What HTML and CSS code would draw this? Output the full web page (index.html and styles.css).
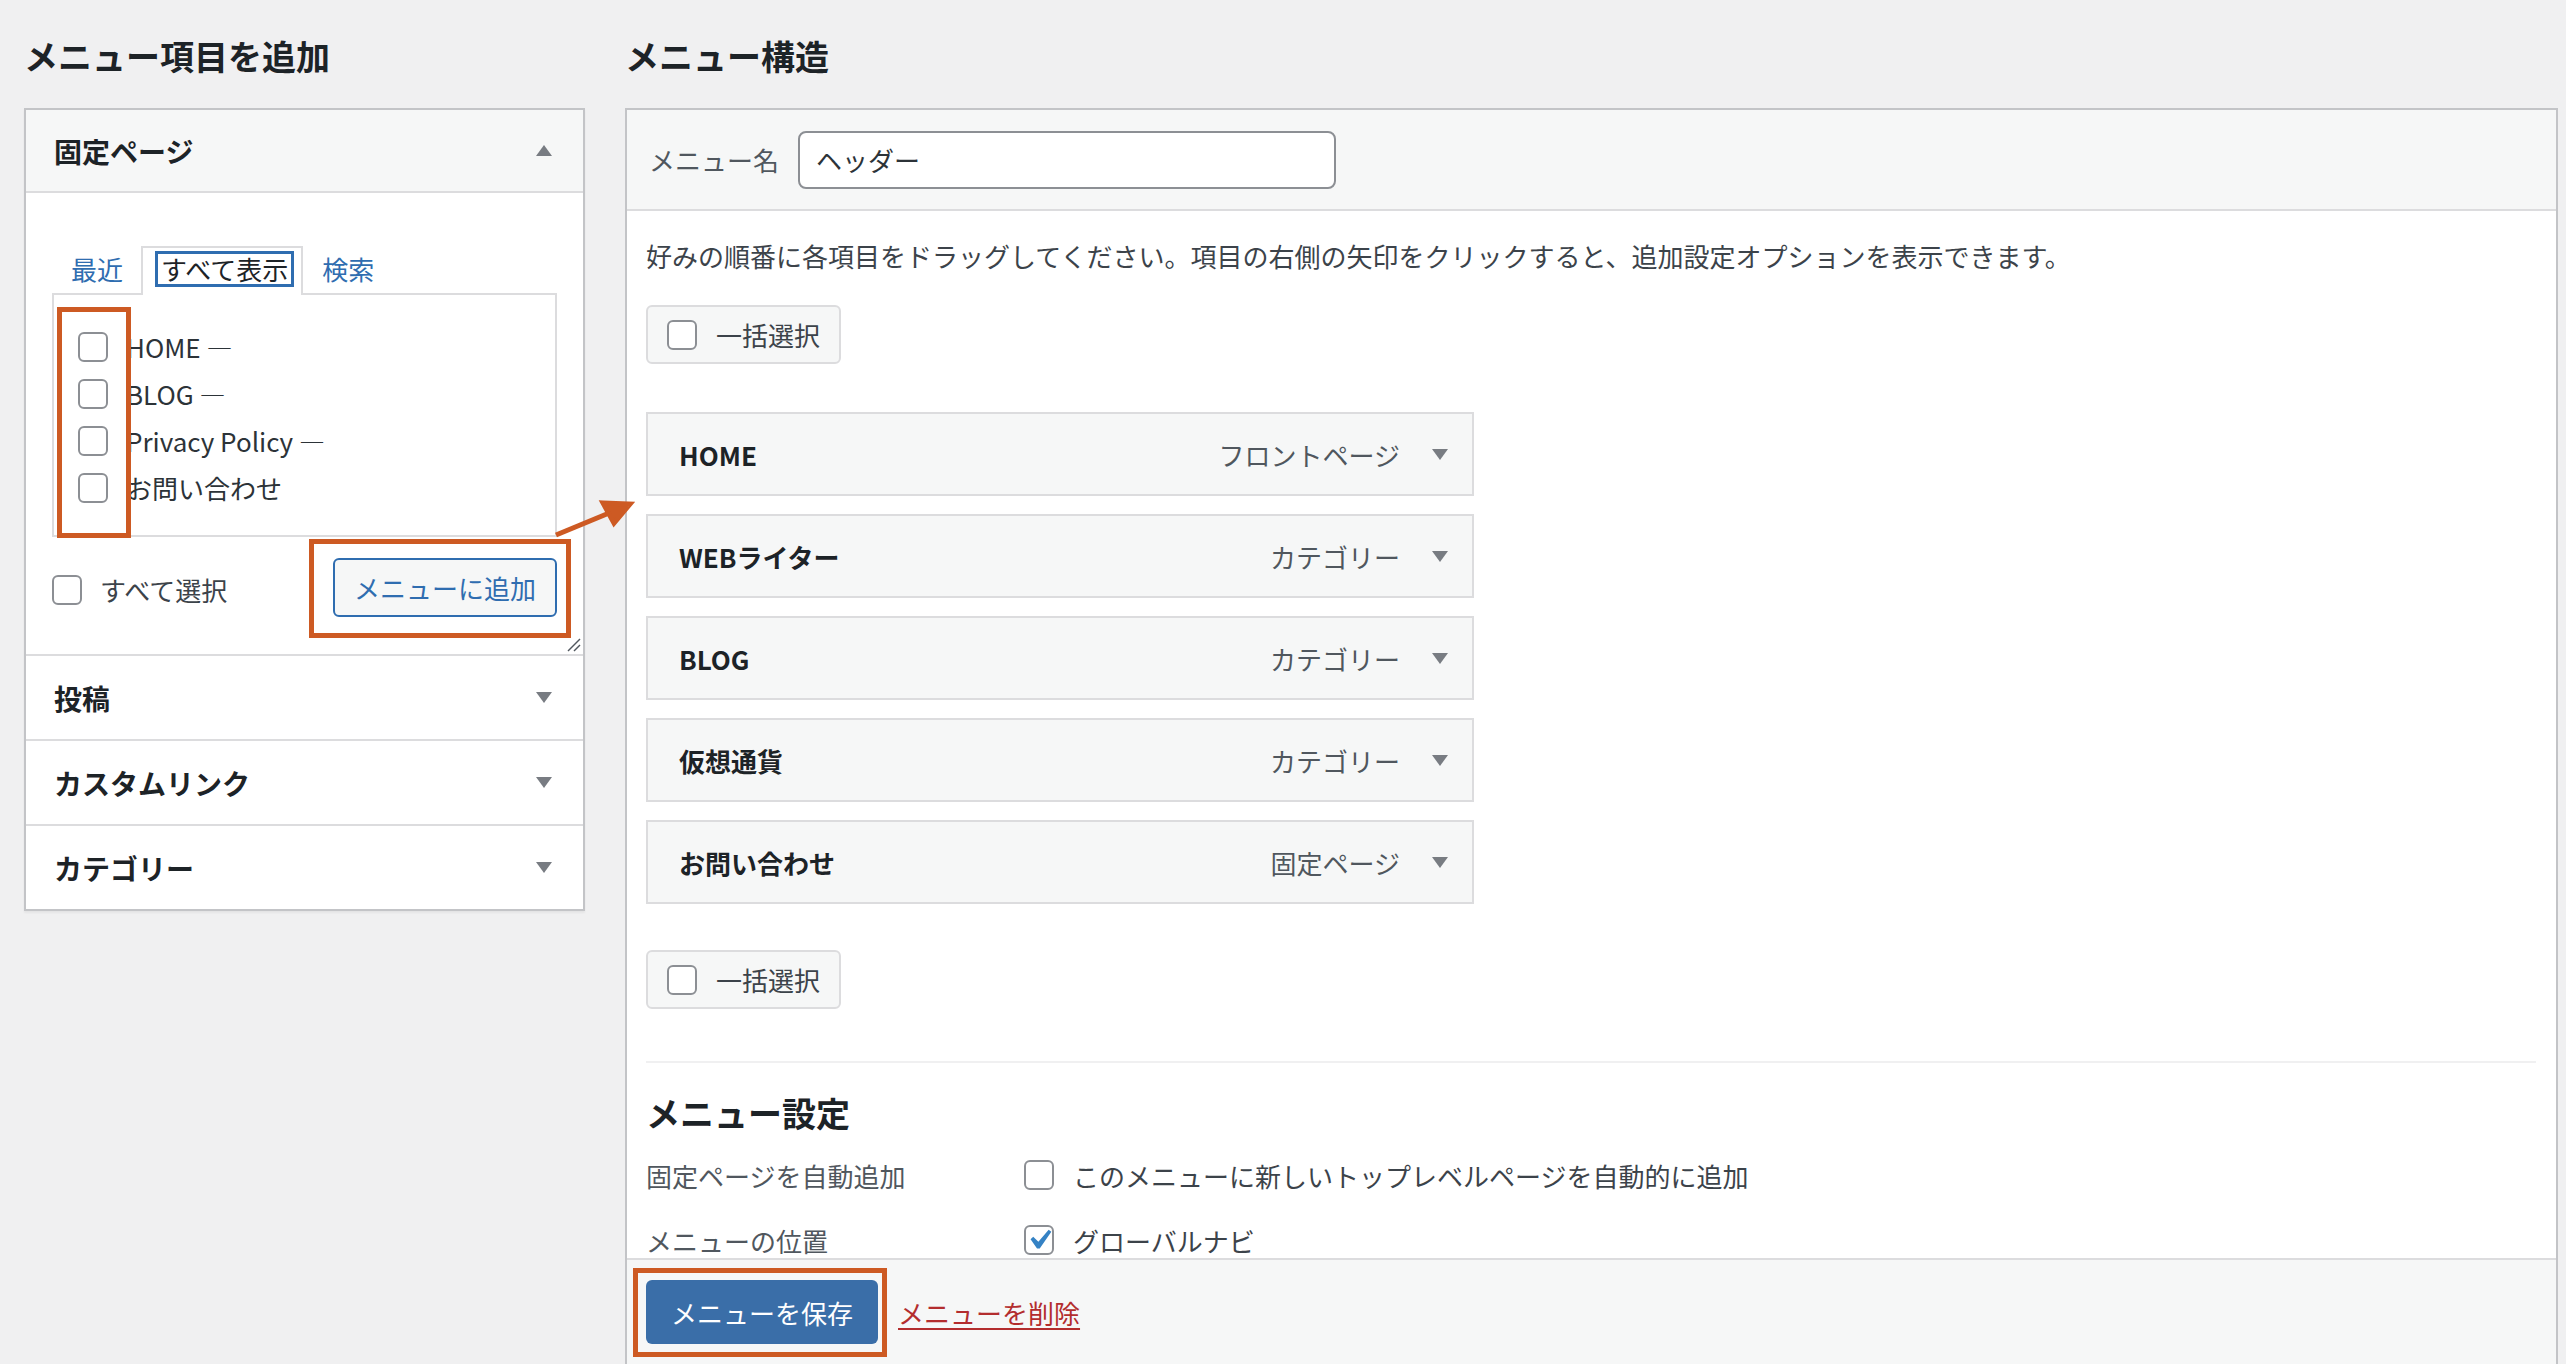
FILE: index.html
```html
<!DOCTYPE html>
<html lang="ja">
<head>
<meta charset="utf-8">
<title>メニュー</title>
<link rel="stylesheet" href="styles.css">
</head>
<body>
<div class="page">
  <div class="col-left">
    <h2 class="title title-left">メニュー項目を追加</h2>
    <div class="accordion">
      <div class="acc-section open">
        <div class="acc-head first">
          <span>固定ページ</span>
          <svg class="tri" viewBox="0 0 16 11" width="16" height="11"><polygon points="0,11 16,11 8,0"/></svg>
        </div>
        <div class="acc-content">
          <div class="tabs">
            <span class="tab link">最近</span>
            <span class="tab active"><span class="ring">すべて表示</span></span>
            <span class="tab link tab-last">検索</span>
          </div>
          <div class="tab-panel">
            <div class="row"><span class="cb"></span><span class="row-text">HOME —</span></div>
            <div class="row"><span class="cb"></span><span class="row-text">BLOG —</span></div>
            <div class="row"><span class="cb"></span><span class="row-text">Privacy Policy —</span></div>
            <div class="row"><span class="cb"></span><span class="row-text">お問い合わせ</span></div>
          </div>
          <div class="actions">
            <div class="select-all"><span class="cb"></span><span class="sa-text">すべて選択</span></div>
            <button class="btn-secondary">メニューに追加</button>
          </div>
          <svg class="resize" viewBox="0 0 14 14" width="14" height="14"><line x1="1" y1="13" x2="13" y2="1"/><line x1="7" y1="13" x2="13" y2="7"/></svg>
        </div>
      </div>
      <div class="acc-section">
        <div class="acc-head"><span>投稿</span><svg class="tri" viewBox="0 0 16 11" width="16" height="11"><polygon points="0,0 16,0 8,11"/></svg></div>
      </div>
      <div class="acc-section">
        <div class="acc-head"><span>カスタムリンク</span><svg class="tri" viewBox="0 0 16 11" width="16" height="11"><polygon points="0,0 16,0 8,11"/></svg></div>
      </div>
      <div class="acc-section">
        <div class="acc-head"><span>カテゴリー</span><svg class="tri" viewBox="0 0 16 11" width="16" height="11"><polygon points="0,0 16,0 8,11"/></svg></div>
      </div>
    </div>
  </div>

  <div class="col-right">
    <h2 class="title">メニュー構造</h2>
    <div class="menu-box">
      <div class="menu-header">
        <span class="name-label">メニュー名</span>
        <div class="name-input">ヘッダー</div>
      </div>
      <div class="menu-body">
        <p class="desc">好みの順番に各項目をドラッグしてください。項目の右側の矢印をクリックすると、追加設定オプションを表示できます。</p>
        <div class="bulk"><span class="cb"></span><span class="bulk-text">一括選択</span></div>
        <ul class="items">
          <li class="item"><span class="item-title">HOME</span><span class="item-type">フロントページ</span><svg class="tri" viewBox="0 0 16 11" width="16" height="11"><polygon points="0,0 16,0 8,11"/></svg></li>
          <li class="item"><span class="item-title">WEBライター</span><span class="item-type">カテゴリー</span><svg class="tri" viewBox="0 0 16 11" width="16" height="11"><polygon points="0,0 16,0 8,11"/></svg></li>
          <li class="item"><span class="item-title">BLOG</span><span class="item-type">カテゴリー</span><svg class="tri" viewBox="0 0 16 11" width="16" height="11"><polygon points="0,0 16,0 8,11"/></svg></li>
          <li class="item"><span class="item-title">仮想通貨</span><span class="item-type">カテゴリー</span><svg class="tri" viewBox="0 0 16 11" width="16" height="11"><polygon points="0,0 16,0 8,11"/></svg></li>
          <li class="item"><span class="item-title">お問い合わせ</span><span class="item-type">固定ページ</span><svg class="tri" viewBox="0 0 16 11" width="16" height="11"><polygon points="0,0 16,0 8,11"/></svg></li>
        </ul>
        <div class="bulk bulk-bottom"><span class="cb"></span><span class="bulk-text">一括選択</span></div>
        <div class="sep"></div>
        <h3 class="settings-title">メニュー設定</h3>
        <div class="setting-row">
          <span class="setting-label">固定ページを自動追加</span>
          <span class="cb"></span>
          <span class="setting-text">このメニューに新しいトップレベルページを自動的に追加</span>
        </div>
        <div class="setting-row second">
          <span class="setting-label">メニューの位置</span>
          <span class="cb checked"><svg viewBox="0 0 20 20" width="40" height="40"><path d="M14.83 4.89l1.34.94-5.81 8.38H9.02L5.78 9.67l1.34-1.25 2.57 2.4z"/></svg></span>
          <span class="setting-text">グローバルナビ</span>
        </div>
      </div>
      <div class="menu-footer">
        <button class="btn-primary">メニューを保存</button>
        <span class="delete">メニューを削除</span>
      </div>
    </div>
  </div>

  <div class="mark mark-checks"></div>
  <div class="mark mark-add"></div>
  <div class="mark mark-save"></div>
  <svg class="arrow" viewBox="0 0 90 50" width="90" height="50">
    <line x1="6" y1="40" x2="64" y2="16"/>
    <polygon points="53,8 80,9 64,28"/>
  </svg>
</div>
</body>
</html>
```

FILE: styles.css
```css
html, body {
  margin: 0;
  height: 1364px;
  overflow: hidden;
  background: #f0f0f1;
}

body {
  font-family: "Noto Sans CJK JP", "Noto Sans", sans-serif;
  font-size: 26px;
  color: #3c434a;
}

.page {
  position: relative;
  display: flex;
  gap: 40px;
  padding: 0 8px 0 24px;
}

.col-left {
  width: 561px;
  flex: none;
}

.col-right {
  flex: 1;
  min-width: 0;
}

.title {
  margin: 34px 0 30px;
  font-size: 34px;
  line-height: 44px;
  font-weight: 700;
  color: #1d2327;
}

/* ---------- Left accordion ---------- */
.accordion {
  background: #fff;
  border: 2px solid #c3c4c7;
  box-shadow: 0 2px 2px rgba(0, 0, 0, 0.05);
}

.acc-section + .acc-section {
  border-top: 2px solid #dcdcde;
}

.acc-head {
  display: flex;
  align-items: center;
  justify-content: space-between;
  height: 83px;
  padding: 0 31px 0 28px;
  font-size: 28px;
  font-weight: 700;
  color: #1d2327;
}

.acc-head.first {
  height: 81px;
  background: #f6f7f7;
  border-bottom: 2px solid #dcdcde;
}

.tri {
  fill: #787c82;
  flex: none;
}

.acc-content {
  position: relative;
  padding: 53px 26px 37px;
}

.tabs {
  display: flex;
  align-items: stretch;
  height: 49px;
  position: relative;
  z-index: 1;
}

.tab {
  display: flex;
  align-items: center;
  line-height: 30px;
  font-size: 26px;
}

.tab.link {
  color: #2f6db0;
  padding: 5px 18px 8px 19px;
}

.tab.tab-last {
  padding-left: 19px;
}

.tab.active {
  background: #fff;
  border: 2px solid #dcdcde;
  border-bottom: none;
  padding: 3px 7px 8px 12px;
  align-items: flex-start;
  color: #1d2327;
}

.ring {
  display: block;
  border: 3px solid #2f6db0;
  padding: 0 3px;
  line-height: 30px;
}

.tab-panel {
  margin-top: -2px;
  border: 2px solid #dcdcde;
  padding: 28px 0 24px 24px;
}

.row {
  display: flex;
  align-items: center;
  height: 47px;
}

.row-text {
  margin-left: 18px;
  color: #2c3338;
}

.cb {
  display: inline-flex;
  align-items: center;
  justify-content: center;
  box-sizing: border-box;
  width: 30px;
  height: 30px;
  border: 2px solid #8c8f94;
  border-radius: 6px;
  background: #fff;
  flex: none;
}

.cb.checked svg {
  flex: none;
  fill: #3582c4;
  margin: -7px;
}

.actions {
  display: flex;
  align-items: center;
  justify-content: space-between;
  margin-top: 21px;
  height: 59px;
}

.select-all {
  display: flex;
  align-items: center;
  margin-top: 4px;
}

.sa-text {
  margin-left: 18px;
  color: #3c434a;
}

.btn-secondary {
  box-sizing: border-box;
  height: 59px;
  padding: 0 19px;
  border: 2px solid #2f6db0;
  border-radius: 6px;
  background: #f6f7f7;
  color: #2f6db0;
  font-family: inherit;
  font-size: 26px;
}

.resize {
  position: absolute;
  right: 2px;
  bottom: 2px;
  stroke: #50575e;
  stroke-width: 1.5;
}

/* ---------- Right menu box ---------- */
.menu-box {
  background: #fff;
  border: 2px solid #c3c4c7;
}

.menu-header {
  display: flex;
  align-items: center;
  height: 99px;
  padding: 0 22px;
  background: #f6f7f7;
  border-bottom: 2px solid #dcdcde;
}

.name-label {
  color: #50575e;
}

.name-input {
  box-sizing: border-box;
  margin-left: 19px;
  width: 538px;
  height: 58px;
  border: 2px solid #8c8f94;
  border-radius: 8px;
  background: #fff;
  padding: 0 16px;
  line-height: 54px;
  color: #2c3338;
}

.menu-body {
  padding: 0 20px 0 19px;
}

.desc {
  margin: 25px 0 0;
  line-height: 40px;
  color: #3c434a;
}

.bulk {
  display: flex;
  width: fit-content;
  align-items: center;
  box-sizing: border-box;
  margin-top: 29px;
  height: 59px;
  padding: 0 19px;
  border: 2px solid #dcdcde;
  border-radius: 6px;
  background: #f6f7f7;
}

.bulk-text {
  margin-left: 19px;
  color: #3c434a;
}

.items {
  list-style: none;
  margin: 48px 0 0;
  padding: 0;
}

.item {
  display: flex;
  align-items: center;
  box-sizing: border-box;
  width: 828px;
  height: 84px;
  margin-bottom: 18px;
  padding: 0 24px 0 31px;
  border: 2px solid #dcdcde;
  background: #f6f7f7;
}

.item-title {
  flex: 1;
  font-weight: 700;
  color: #1d2327;
}

.item-type {
  color: #50575e;
  margin-right: 32px;
}

.bulk-bottom {
  margin-top: 46px;
}

.sep {
  margin-top: 52px;
  height: 2px;
  background: #f0f0f1;
}

.settings-title {
  margin: 28px 0 22px;
  font-size: 34px;
  line-height: 44px;
  font-weight: 700;
  color: #1d2327;
}

.setting-row {
  display: flex;
  align-items: center;
  height: 36px;
}

.setting-row.second {
  margin-top: 29px;
}

.setting-label {
  width: 378px;
  color: #50575e;
}

.setting-text {
  margin-left: 19px;
  color: #3c434a;
}

.menu-footer {
  display: flex;
  align-items: center;
  gap: 20px;
  padding: 20px 19px;
  background: #f6f7f7;
  border-top: 2px solid #dcdcde;
}

.btn-primary {
  height: 64px;
  padding: 0 25px;
  border: none;
  border-radius: 6px;
  background: #3a6ea8;
  color: #fff;
  font-family: inherit;
  font-size: 26px;
}

.delete {
  color: #b32d2e;
  text-decoration: underline;
  text-underline-offset: 4px;
}

/* ---------- Annotations ---------- */
.mark {
  position: absolute;
  box-sizing: border-box;
  border: 5px solid #cd5a23;
  z-index: 5;
}

.mark-checks {
  left: 57px;
  top: 307px;
  width: 74px;
  height: 231px;
}

.mark-add {
  left: 309px;
  top: 539px;
  width: 262px;
  height: 99px;
}

.mark-save {
  left: 633px;
  top: 1268px;
  width: 254px;
  height: 89px;
}

.arrow {
  position: absolute;
  left: 550px;
  top: 495px;
  z-index: 5;
  stroke: #cd5a23;
  stroke-width: 5;
  fill: #cd5a23;
}
```
